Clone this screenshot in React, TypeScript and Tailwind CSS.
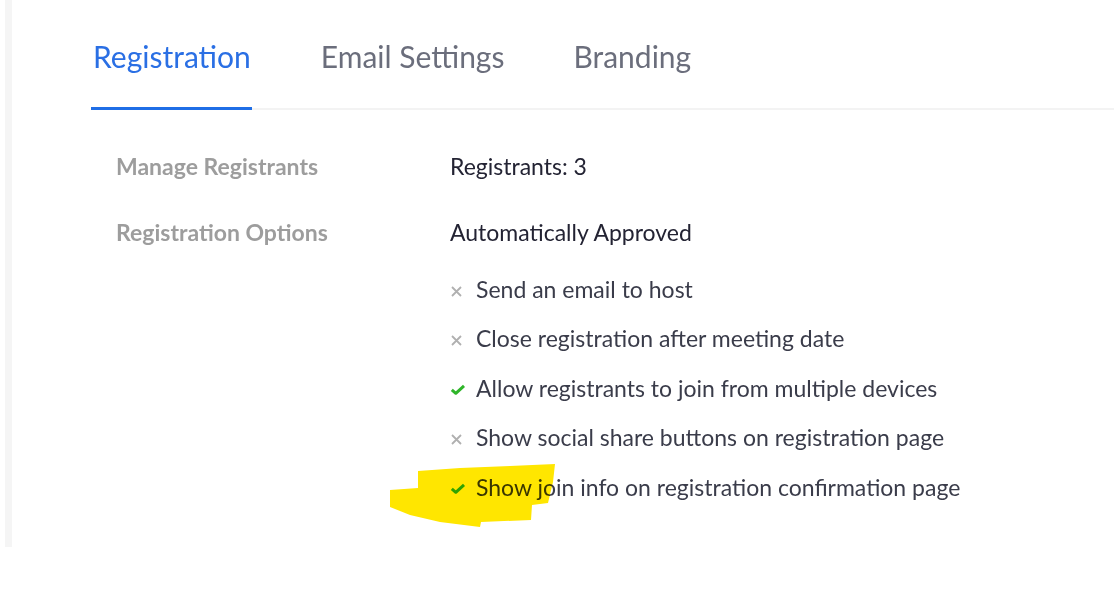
const options = [
  { on: false, text: "Send an email to host" },
  { on: false, text: "Close registration after meeting date" },
  { on: true, text: "Allow registrants to join from multiple devices" },
  { on: false, text: "Show social share buttons on registration page" },
  { on: true, text: "Show join info on registration confirmation page" },
];

function Cross() {
  return (
    <svg width="13" height="13" viewBox="0 0 13 13" className="mt-[5px]">
      <path d="M2 2 L11 11 M11 2 L2 11" stroke="#b0b0b0" strokeWidth="1.8" fill="none" />
    </svg>
  );
}

function Check() {
  return (
    <svg width="16" height="13" viewBox="0 0 16 13" className="mt-[4px]">
      <path d="M1.8 6.8 L5.8 10.3 L14 2.8" stroke="#2fb52a" strokeWidth="3" fill="none" strokeLinejoin="round" />
    </svg>
  );
}

export default function App() {
  return (
    <div className="relative flex min-h-[589px] w-[1114px] bg-white font-['Lato','Liberation_Sans',sans-serif] overflow-hidden">
      {/* left rail */}
      <div className="ml-[5px] h-[547px] w-[7px] bg-[#f5f5f5]" />

      <div className="ml-[79px] flex-1">
        {/* tabs */}
        <div className="flex gap-[69px] border-b-2 border-[#f3f3f3]">
          <div className="-mb-[2px] border-b-[3px] border-[#1f6ee6] pl-[2px] pr-[1px] pt-[38px] pb-[33px] text-[30px] leading-[36px] text-[#2a6fe4]">
            Registration
          </div>
          <div className="-mb-[2px] border-b-[3px] border-transparent pt-[38px] pb-[33px] text-[30px] leading-[36px] text-[#6b6e7c]">
            Email Settings
          </div>
          <div className="-mb-[2px] border-b-[3px] border-transparent pt-[38px] pb-[33px] text-[30px] leading-[36px] text-[#6b6e7c]">
            Branding
          </div>
        </div>

        {/* settings */}
        <div className="pl-[25px] text-[23px] leading-[24px]">
          <div className="mt-[44px] flex">
            <div className="w-[334px] text-[23px] font-bold text-[#9d9d9d]">Manage Registrants</div>
            <div className="text-[#232333]">Registrants: 3</div>
          </div>
          <div className="mt-[42px] flex">
            <div className="w-[334px] text-[23px] font-bold text-[#9d9d9d]">Registration Options</div>
            <div>
              <div className="text-[#232333]">Automatically Approved</div>
              <div className="mt-[20px]">
                {options.map((o) => (
                  <div key={o.text} className="flex h-[49.5px] items-center">
                    <div className="flex w-[26px]">{o.on ? <Check /> : <Cross />}</div>
                    <span className="text-[#3a3c4a]">{o.text}</span>
                  </div>
                ))}
              </div>
            </div>
          </div>
        </div>
      </div>

      {/* highlighter scribble */}
      <svg className="pointer-events-none absolute left-0 top-0 mix-blend-multiply" width="1114" height="589">
        <path
          d="M418 471 L460 468 L510 466 L555 464 L553 482 L548 503 L532 505 L531 520 L481 522 L480 527 L440 522 L410 515 L390 507 L390 490 L418 488 Z"
          fill="#ffe600"
        />
      </svg>
    </div>
  );
}
